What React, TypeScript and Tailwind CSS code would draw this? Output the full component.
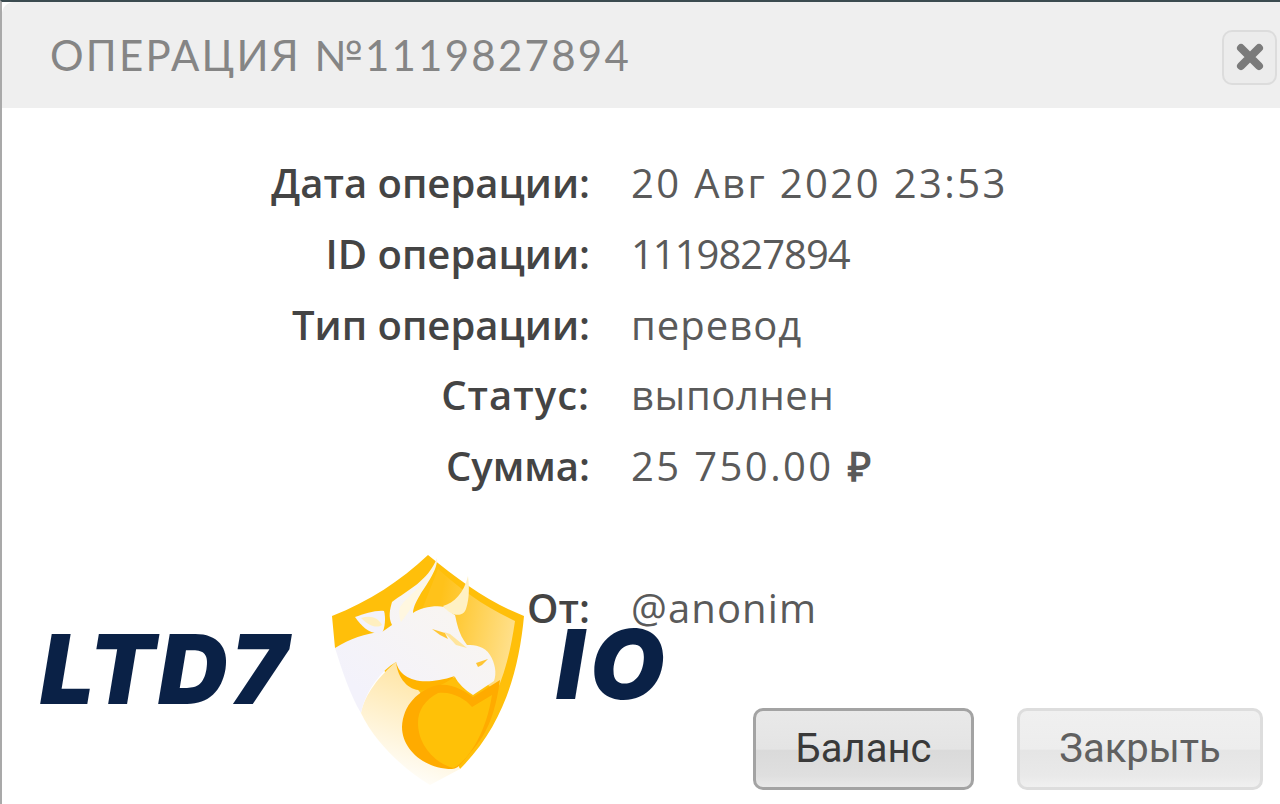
import React from "react";

const rows = [
  { label: "Дата операции:", value: "20 Авг 2020 23:53", track: "tracking-[2.4px]", labelTrack: "" },
  { label: "ID операции:", value: "1119827894", track: "tracking-[-1px]", labelTrack: "" },
  { label: "Тип операции:", value: "перевод", track: "tracking-[1px]", labelTrack: "" },
  { label: "Статус:", value: "выполнен", track: "tracking-[0.6px]", labelTrack: "tracking-[1px]" },
  { label: "Сумма:", value: "25 750.00", track: "tracking-[2.4px]", labelTrack: "", ruble: true },
  { label: "", value: "", track: "", labelTrack: "" },
  { label: "От:", value: "@anonim", track: "tracking-[1.1px]", labelTrack: "" },
];

const ShieldLogo = () => (
  <svg width="220" height="245" viewBox="0 0 220 245">
    <defs>
      <linearGradient id="panel" x1="0.2" y1="0.3" x2="1" y2="0.5">
        <stop offset="0" stopColor="#ffc21a" />
        <stop offset="1" stopColor="#ffe08c" />
      </linearGradient>
      <linearGradient id="fade" x1="0.7" y1="0" x2="0.4" y2="1">
        <stop offset="0" stopColor="#ffe29a" />
        <stop offset="1" stopColor="#fff" />
      </linearGradient>
      <linearGradient id="tip" x1="0.6" y1="0.85" x2="0.4" y2="1">
        <stop offset="0" stopColor="#ffd766" />
        <stop offset="1" stopColor="#fff" />
      </linearGradient>
      <linearGradient id="horn" x1="1" y1="0" x2="0.2" y2="0.9">
        <stop offset="0" stopColor="#fff3cf" />
        <stop offset="0.4" stopColor="#f8f5f2" />
        <stop offset="1" stopColor="#f3f2fb" />
      </linearGradient>
    </defs>
    {/* shield, only the top and the right rim stay yellow */}
    <path d="M108 10C140 36 170 58 204 71C199 125 184 180 140 224L120 200L60 120L15 103L12 71C50 56 80 36 108 10Z" fill="#ffbf0a" />
    <path d="M118 24C140 44 165 62 195 76C190 110 184 130 176 148L100 70Z" fill="url(#panel)" />
    {/* pale lower left of the shield */}
    <path d="M76 117C60 130 44 150 41 168C55 198 85 225 110 240L140 224L110 160Z" fill="url(#fade)" />
    {/* body, head and first horn in one outline */}
    <path d="M15 103C30 94 45 88 62 87L72 80C68 72 70 64 72 57C88 45 108 36 117 13C118 25 106 40 100 50C95 58 93 64 93 68C100 63 115 60 124 62C130 66 134 70 135 70C137 78 138 88 147 100C155 100 165 101 170 110C175 118 177 128 174 136L153 150C145 145 138 138 135 132C120 136 105 140 93 140C82 135 78 125 76 117C62 125 46 145 41 168C30 150 22 125 15 103Z" fill="url(#horn)" />
    {/* second horn */}
    <path d="M148 31C144 48 134 58 123 61C130 70 142 74 146 64C150 52 149 40 148 31Z" fill="#fff1c4" />
    {/* ear */}
    <path d="M35 72C44 69 56 65 64 66C66 72 65 84 62 88C50 90 42 82 35 72Z" fill="#f3f2fb" />
    <path d="M41 73C50 70 58 72 62 80C56 84 48 80 41 73Z" fill="#ffefbf" />
    {/* shading on the horn */}
    <path d="M114 22C106 40 88 50 80 62C78 68 80 74 81 77C90 66 100 50 114 22Z" fill="#fff7e0" />
    {/* eye and muzzle */}
    <path d="M112 84L125 88L128 94L120 90Z" fill="#ffc533" />
    <path d="M124 87L130 89L147 103L136 100Z" fill="#ffe59c" />
    <path d="M156 118L168 114L162 120L158 122Z" fill="#ffc533" />
    {/* chin */}
    <path d="M76 117C80 133 98 143 135 131C128 138 114 143 104 145C90 147 78 135 76 117Z" fill="#ffb300" />
    {/* coin */}
    <path d="M118 140C98 145 83 160 82 182C82 205 105 224 132 224C138 224 142 218 150 208C165 192 175 172 180 135L153 152C145 146 132 138 118 140Z" fill="#ffab00" />
    <path d="M118 148C105 155 98 165 98 178C98 200 115 218 133 223C143 220 165 195 172 150L152 162C146 154 132 146 118 148Z" fill="#ffc107" />
  </svg>
);

export default function App() {
  return (
    <div className="relative flex h-[804px] w-[1280px] flex-col overflow-hidden border-t-2 border-l-2 border-t-[#3b4b50] border-l-[#a9a9a9] bg-white font-['Open_Sans',sans-serif]">
      <div className="flex h-[106px] shrink-0 items-center justify-between rounded-tl-xl bg-[#efefef] pr-[3px] pl-[48px]">
        <h1 className="font-['Lato','Noto_Sans',sans-serif] text-[42px] font-normal tracking-[2.25px] text-[#858585]">
          ОПЕРАЦИЯ №1119827894
        </h1>
        <button className="mt-[4px] flex h-[55px] w-[55px] items-center justify-center rounded-[10px] border-2 border-[#dcdcdc] bg-[#ececec]">
          <svg width="28" height="28" viewBox="0 0 28 28">
            <path d="M5 5L23 23M23 5L5 23" stroke="#7b7b7b" strokeWidth="8" strokeLinecap="round" />
          </svg>
        </button>
      </div>

      <div className="mt-[40px] grid grid-cols-[588px_1fr] gap-x-[41px]">
        {rows.map((row, i) => (
          <React.Fragment key={i}>
            <div className={`h-[70.8px] text-right text-[40px] leading-[70px] font-semibold text-[#444] ${row.labelTrack}`}>{row.label}</div>
            <div className={`h-[70.8px] text-[40px] leading-[70px] font-normal text-[#5a5a5a] ${row.track}`}>
              {row.value}
              {row.ruble && <span className="ml-[14px] font-bold">₽</span>}
            </div>
          </React.Fragment>
        ))}
      </div>

      <div className="mt-auto mb-[14px] flex justify-end gap-[43px] pr-[17px] font-['Roboto',sans-serif] text-[40px]">
        <button className="h-[82px] w-[221px] rounded-[10px] border-[3px] border-[#a3a3a3] bg-[linear-gradient(#e9e9e9_0%,#e4e4e4_50%,#dadada_52%,#dfdfdf_85%,#e8e8e8_100%)] text-[#3a3a3a]">
          Баланс
        </button>
        <button className="h-[82px] w-[246px] rounded-[10px] border-[3px] border-[#dddddd] bg-[linear-gradient(#f0f0f0_0%,#ededed_50%,#e5e5e5_52%,#e9e9e9_85%,#f0f0f0_100%)] text-[#606060]">
          Закрыть
        </button>
      </div>

      <div className="absolute top-[543px] left-[318px]">
        <ShieldLogo />
      </div>
      <span className="absolute top-[612px] left-[38px] font-['Inter',sans-serif] text-[96px] leading-[110px] font-black tracking-[3px] text-[#0a2146] italic">LTD7</span>
      <span className="absolute top-[607px] left-[554px] font-['Inter',sans-serif] text-[96px] leading-[110px] font-black tracking-[6px] text-[#0a2146] italic">IO</span>
    </div>
  );
}
